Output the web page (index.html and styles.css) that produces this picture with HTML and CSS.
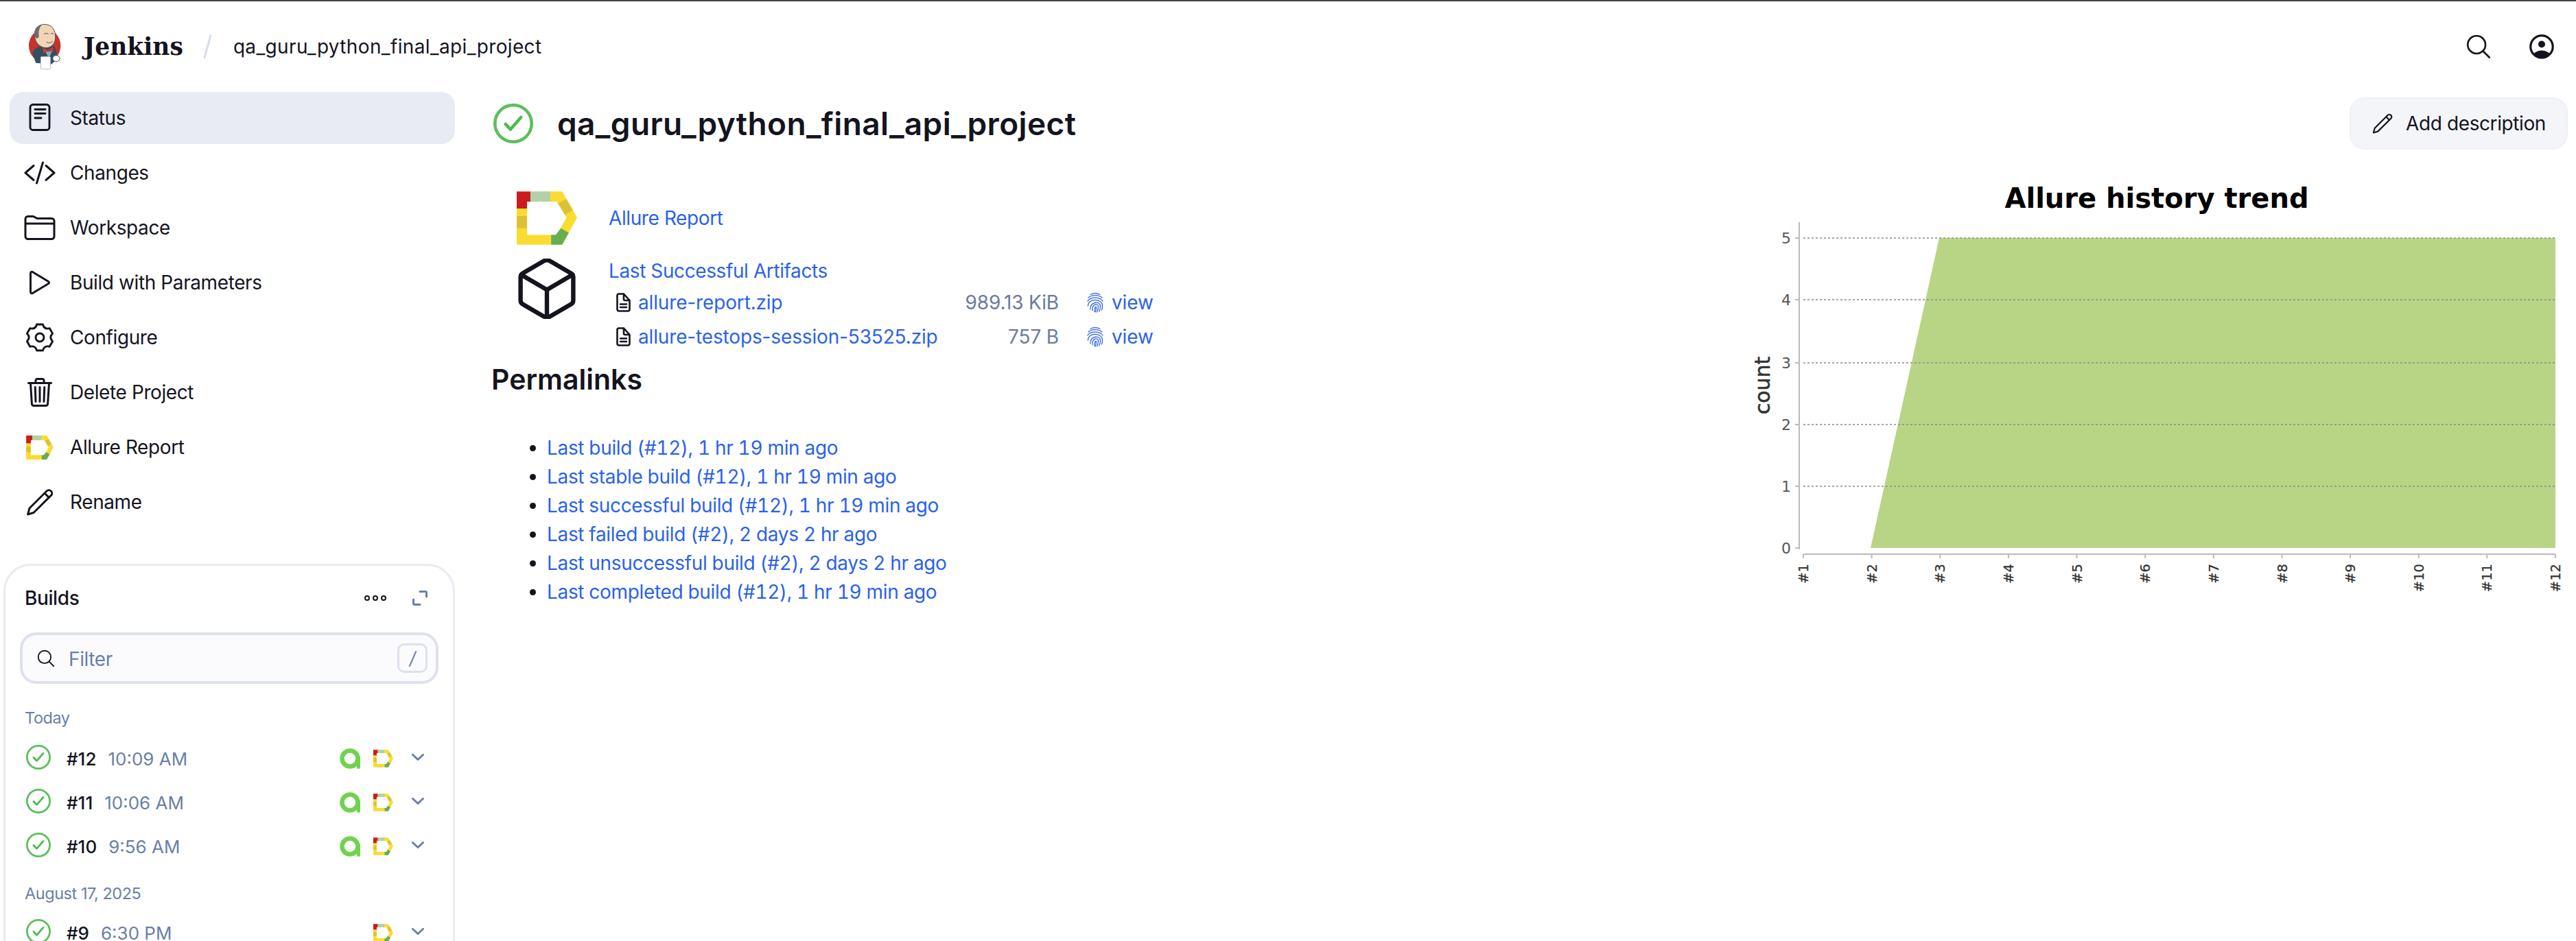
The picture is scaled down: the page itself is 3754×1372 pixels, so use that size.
FILE: index.html
```html
<!DOCTYPE html>
<html lang="en">
<head>
<meta charset="utf-8">
<title>qa_guru_python_final_api_project - Jenkins</title>
<link rel="stylesheet" href="styles.css">
</head>
<body>
<svg class="defs" xmlns="http://www.w3.org/2000/svg">
  <symbol id="i-doc" viewBox="0 0 48 48"><rect x="10" y="4.500" width="28" height="37" rx="4"/><path d="M17 11.500h15M17 17.500h15M17 24h9"/></symbol>
  <symbol id="i-code" viewBox="0 0 512 512"><polyline points="160 368 32 256 160 144"/><polyline points="352 368 480 256 352 144"/><line x1="304" y1="96" x2="208" y2="416"/></symbol>
  <symbol id="i-folder" viewBox="0 0 512 512"><path d="M440 432H72a40 40 0 01-40-40V120a40 40 0 0140-40h75.890a40 40 0 0122.190 6.720l27.840 18.560a40 40 0 0022.190 6.720H440a40 40 0 0140 40v240a40 40 0 01-40 40zM32 192h448"/></symbol>
  <symbol id="i-play" viewBox="0 0 512 512"><path d="M112 111v290c0 17.440 17 28.520 31 20.160l247.900-148.370c12.120-7.250 12.120-26.330 0-33.580L143 90.840c-14-8.360-31 2.720-31 20.160z"/></symbol>
  <symbol id="i-cog" viewBox="0 0 48 48"><path d="M19.600 5L28.400 5Q30.500 12.700 38.300 10.700L42.600 18.300Q37 24 42.600 29.700L38.300 37.300Q30.500 35.300 28.400 43L19.600 43Q17.500 35.300 9.700 37.300L5.400 29.700Q11 24 5.400 18.300L9.700 10.700Q17.500 12.700 19.600 5Z"/><circle cx="24" cy="24" r="6"/></symbol>
  <symbol id="i-trash" viewBox="0 0 512 512"><path d="M112 112l20 320c.950 18.490 14.400 32 32 32h184c17.670 0 30.870-13.510 32-32l20-320"/><line x1="80" y1="112" x2="432" y2="112"/><path d="M192 112V72h0a23.930 23.930 0 0124-24h80a23.930 23.930 0 0124 24h0v40M256 176v224M184 176l8 224M328 176l-8 224"/></symbol>
  <symbol id="i-pencil" viewBox="0 0 48 48"><path d="M6.500 42L9 33L34 8a4.500 4.500 0 0 1 6.400 6.400L15 39.500ZM31 11l6.400 6.400"/></symbol>
  <symbol id="i-search" viewBox="0 0 512 512"><path d="M221.090 64a157.090 157.090 0 10157.090 157.090A157.100 157.100 0 00221.090 64z"/><path d="M338.290 338.290L448 448"/></symbol>
  <symbol id="i-check" viewBox="0 0 64 64"><circle class="ring" cx="32" cy="32" r="29.500"/><path class="tick" d="M19.500 33L27.500 41.500L44.500 22"/></symbol>
  <symbol id="i-allure" viewBox="70 58 263 232">
    <path class="d-yellow" fill-rule="evenodd" d="M70 58H268L333 172L268 290H70ZM115 102V247H245L287 172L245 102Z"/>
    <path class="d-red" d="M70 58H130V102H115V132H70Z"/>
    <path class="d-pale" d="M130 58H216V102H130Z"/>
    <path class="d-dark" d="M70 165H115V218H70Z"/>
    <path class="d-dark" d="M286 90L315 140L280 160L250 110Z"/>
    <path class="d-green" d="M220 247H240L262 218L297 238L268 290H220Z"/>
  </symbol>
  <symbol id="i-q" viewBox="0 0 32 32"><circle class="q-ring" cx="15" cy="16" r="11.500"/><path class="q-tail" d="M27.500 15V28.500"/></symbol>
  <symbol id="i-chev" viewBox="0 0 18 10"><path d="M1.500 1.500L9 8.500L16.500 1.500"/></symbol>
  <symbol id="i-file" viewBox="0 0 21 28"><path d="M3.500 1.500H11L19.500 11V24a2.500 2.500 0 0 1-2.500 2.500H4A2.500 2.500 0 0 1 1.500 24V3.500a2 2 0 0 1 2-2zM11 1.500V9a2 2 0 0 0 2 2h6.500M6 16.500h9M6 21h9"/></symbol>
  <symbol id="i-print" viewBox="0 0 26 30"><path d="M6 3.500C10 1 16 1 20 3.500M3 8C8 3.500 18 3.500 23 8M2 13C6 6.500 20 6.500 24 13M2.500 20C2.500 8.500 23.500 8.500 23.500 20C23.500 22 23.300 24 22.500 26M6 25C5 13.500 20.500 12 20.500 20.500C20.500 23 20 26 18.800 28M9 26.800C8 17 17.500 15.500 17.500 21C17.500 24 17 26.500 15.500 29M12 28C11.500 22 14.500 20 14.500 22.500C14.500 25 14 27 13 29"/></symbol>
</svg>

<header class="topbar">
  <a class="brand" href="#">
    <svg class="logo" viewBox="60 95 155 215" xmlns="http://www.w3.org/2000/svg">
      <ellipse cx="138" cy="198" rx="72" ry="76" fill="#c8322f"/>
      <path d="M82 232C88 212 112 200 130 198L180 200C192 215 196 240 190 262L168 282L98 276Z" fill="#335061"/>
      <path d="M92 150C92 112 118 100 142 102C172 104 190 130 186 168C183 192 165 208 145 208C118 208 92 186 92 150Z" fill="#f0d6b7" stroke="#49483f" stroke-width="3"/>
      <path d="M92 150C90 122 104 108 124 104C110 122 110 140 112 158C102 170 94 166 92 150Z" fill="#6d6b6d"/>
      <path d="M135 146c6-5 14-5 20 0M165 145c4-3 9-3 14 0M146 182c10 6 20 4 28-4" fill="none" stroke="#49483f" stroke-width="3"/>
      <path d="M130 208L152 218L176 204L176 228L152 222L132 232Z" fill="#d33833"/>
      <path d="M142 226L170 224L160 250L152 246Z" fill="#81b0c4"/>
      <rect x="120" y="248" width="44" height="56" rx="4" fill="#fff" stroke="#b8b8b8" stroke-width="3"/>
      <ellipse cx="190" cy="256" rx="16" ry="14" fill="#fff" stroke="#49483f" stroke-width="3"/>
    </svg>
    <span class="brand-name">Jenkins</span>
  </a>
  <span class="crumb-sep"></span>
  <a class="crumb" href="#">qa_guru_python_final_api_project</a>
  <div class="top-actions">
    <svg class="ico top-search"><use href="#i-search"/></svg>
    <svg class="top-user" viewBox="0 0 36 36" xmlns="http://www.w3.org/2000/svg">
      <defs><clipPath id="user-clip"><circle cx="18" cy="18" r="16"/></clipPath></defs>
      <circle class="user-ring" cx="18" cy="18" r="16.200"/>
      <circle class="user-fill" cx="18" cy="14.500" r="5"/>
      <ellipse class="user-fill" cx="18" cy="33" rx="13" ry="9.500" clip-path="url(#user-clip)"/>
    </svg>
  </div>
</header>

<div class="page">
  <aside class="sidebar">
    <nav class="side-nav">
      <a class="side-item is-active" href="#"><svg class="ico ico-fine side-ico"><use href="#i-doc"/></svg>Status</a>
      <a class="side-item" href="#"><svg class="ico side-ico"><use href="#i-code"/></svg>Changes</a>
      <a class="side-item" href="#"><svg class="ico side-ico"><use href="#i-folder"/></svg>Workspace</a>
      <a class="side-item" href="#"><svg class="ico side-ico"><use href="#i-play"/></svg>Build with Parameters</a>
      <a class="side-item" href="#"><svg class="ico ico-fine side-ico"><use href="#i-cog"/></svg>Configure</a>
      <a class="side-item" href="#"><svg class="ico side-ico"><use href="#i-trash"/></svg>Delete Project</a>
      <a class="side-item" href="#"><span class="side-allure"><svg class="allure-sm"><use href="#i-allure"/></svg></span>Allure Report</a>
      <a class="side-item" href="#"><svg class="ico ico-fine side-ico"><use href="#i-pencil"/></svg>Rename</a>
    </nav>

    <section class="builds">
      <div class="builds-head">
        <span class="builds-title">Builds</span>
        <span class="dots"><i></i><i></i><i></i></span>
        <svg class="expand" viewBox="0 0 22 22" xmlns="http://www.w3.org/2000/svg"><path d="M11 1.500H19A1.500 1.500 0 0 1 20.500 3V9M1.500 13V19A1.500 1.500 0 0 0 3 20.500H11"/></svg>
      </div>
      <div class="filter">
        <svg class="ico filter-ico"><use href="#i-search"/></svg>
        <span class="filter-text">Filter</span>
        <kbd class="filter-key">/</kbd>
      </div>
      <div class="group-label">Today</div>
      <div class="build-row">
        <svg class="check-sm"><use href="#i-check"/></svg><a class="build-no" href="#">#12</a><span class="build-time">10:09 AM</span>
        <span class="build-actions"><svg class="q-ico"><use href="#i-q"/></svg><svg class="allure-xs"><use href="#i-allure"/></svg><svg class="chev"><use href="#i-chev"/></svg></span>
      </div>
      <div class="build-row">
        <svg class="check-sm"><use href="#i-check"/></svg><a class="build-no" href="#">#11</a><span class="build-time">10:06 AM</span>
        <span class="build-actions"><svg class="q-ico"><use href="#i-q"/></svg><svg class="allure-xs"><use href="#i-allure"/></svg><svg class="chev"><use href="#i-chev"/></svg></span>
      </div>
      <div class="build-row">
        <svg class="check-sm"><use href="#i-check"/></svg><a class="build-no" href="#">#10</a><span class="build-time">9:56 AM</span>
        <span class="build-actions"><svg class="q-ico"><use href="#i-q"/></svg><svg class="allure-xs"><use href="#i-allure"/></svg><svg class="chev"><use href="#i-chev"/></svg></span>
      </div>
      <div class="group-label group-next">August 17, 2025</div>
      <div class="build-row">
        <svg class="check-sm"><use href="#i-check"/></svg><a class="build-no" href="#">#9</a><span class="build-time">6:30 PM</span>
        <span class="build-actions"><svg class="allure-xs"><use href="#i-allure"/></svg><svg class="chev"><use href="#i-chev"/></svg></span>
      </div>
    </section>
  </aside>

  <main class="main">
    <div class="title-row">
      <svg class="check-lg"><use href="#i-check"/></svg>
      <h1 class="title">qa_guru_python_final_api_project</h1>
      <button class="add-desc" type="button"><svg class="ico ico-fine add-ico"><use href="#i-pencil"/></svg>Add description</button>
    </div>
    <div class="main-body">
      <div class="main-left">
        <div class="task">
          <svg class="allure-lg"><use href="#i-allure"/></svg>
          <a class="link" href="#">Allure Report</a>
        </div>
        <div class="task task-artifacts">
          <svg class="ico cube" viewBox="36 36 440 440" xmlns="http://www.w3.org/2000/svg"><path d="M448 341.370V170.610A32 32 0 00432.110 143l-152-88.460a47.940 47.940 0 00-48.240 0L79.890 143A32 32 0 0064 170.610v170.760A32 32 0 0079.890 369l152 88.460a48 48 0 0048.240 0l152-88.460A32 32 0 00448 341.370z"/><polyline points="69 153.990 256 263.990 443 153.990"/><line x1="256" y1="463.990" x2="256" y2="263.990"/></svg>
          <div class="artifacts">
            <a class="link artifacts-link" href="#">Last Successful Artifacts</a>
            <div class="artifact-row">
              <svg class="file-ico"><use href="#i-file"/></svg>
              <a class="link" href="#">allure-report.zip</a>
              <span class="size">989.13 KiB</span>
              <a class="link view" href="#"><svg class="print-ico"><use href="#i-print"/></svg>view</a>
            </div>
            <div class="artifact-row">
              <svg class="file-ico"><use href="#i-file"/></svg>
              <a class="link" href="#">allure-testops-session-53525.zip</a>
              <span class="size">757 B</span>
              <a class="link view" href="#"><svg class="print-ico"><use href="#i-print"/></svg>view</a>
            </div>
          </div>
        </div>
        <h2 class="perma-title">Permalinks</h2>
        <ul class="perma-list">
          <li><a class="link" href="#">Last build (#12), 1 hr 19 min ago</a></li>
          <li><a class="link" href="#">Last stable build (#12), 1 hr 19 min ago</a></li>
          <li><a class="link" href="#">Last successful build (#12), 1 hr 19 min ago</a></li>
          <li><a class="link" href="#">Last failed build (#2), 2 days 2 hr ago</a></li>
          <li><a class="link" href="#">Last unsuccessful build (#2), 2 days 2 hr ago</a></li>
          <li><a class="link" href="#">Last completed build (#12), 1 hr 19 min ago</a></li>
        </ul>
      </div>
      <svg class="chart" viewBox="2540 248 1214 640" xmlns="http://www.w3.org/2000/svg">
        <text class="c-title" x="3143" y="303">Allure history trend</text>
        <polygon class="c-area" points="2726,799 2826,347 3724,347 3724,799"/>
        <path class="c-grid" d="M2628 347H3724M2628 437H3724M2628 529H3724M2628 619H3724M2628 709H3724"/>
        <path class="c-axis" d="M2622 324V801M2616 347H2622M2616 437H2622M2616 529H2622M2616 619H2622M2616 709H2622M2616 799H2622"/>
        <path class="c-axis" d="M2628 808H3724M2628 808v6M2727.600 808v6M2827.300 808v6M2926.900 808v6M3026.500 808v6M3126.200 808v6M3225.800 808v6M3325.500 808v6M3425.100 808v6M3524.700 808v6M3624.400 808v6M3724 808v6"/>
        <text class="c-num" x="2610" y="355">5</text>
        <text class="c-num" x="2610" y="445">4</text>
        <text class="c-num" x="2610" y="537">3</text>
        <text class="c-num" x="2610" y="627">2</text>
        <text class="c-num" x="2610" y="717">1</text>
        <text class="c-num" x="2610" y="807">0</text>
        <text class="c-count" transform="rotate(-90 2579 562)" x="2579" y="562">count</text>
        <text class="c-tick" transform="rotate(-90 2635 822)" x="2635" y="822">#1</text>
        <text class="c-tick" transform="rotate(-90 2734.600 822)" x="2734.600" y="822">#2</text>
        <text class="c-tick" transform="rotate(-90 2834.300 822)" x="2834.300" y="822">#3</text>
        <text class="c-tick" transform="rotate(-90 2933.900 822)" x="2933.900" y="822">#4</text>
        <text class="c-tick" transform="rotate(-90 3033.500 822)" x="3033.500" y="822">#5</text>
        <text class="c-tick" transform="rotate(-90 3133.200 822)" x="3133.200" y="822">#6</text>
        <text class="c-tick" transform="rotate(-90 3232.800 822)" x="3232.800" y="822">#7</text>
        <text class="c-tick" transform="rotate(-90 3332.500 822)" x="3332.500" y="822">#8</text>
        <text class="c-tick" transform="rotate(-90 3432.100 822)" x="3432.100" y="822">#9</text>
        <text class="c-tick" transform="rotate(-90 3531.700 822)" x="3531.700" y="822">#10</text>
        <text class="c-tick" transform="rotate(-90 3631.400 822)" x="3631.400" y="822">#11</text>
        <text class="c-tick" transform="rotate(-90 3731 822)" x="3731" y="822">#12</text>
      </svg>
    </div>
  </main>
</div>
</body>
</html>
```
FILE: styles.css
```css
* { box-sizing: border-box; }
html, body { height: 1372px; overflow: hidden; }
body {
  margin: 0;
  background: #fff;
  color: #14141f;
  font-family: Inter, "Liberation Sans", sans-serif;
  font-size: 28px;
  letter-spacing: -0.4px;
  line-height: 42px;
}
a { color: inherit; text-decoration: none; white-space: nowrap; }
.defs { display: none; }

.ico {
  fill: none;
  stroke: #14141f;
  stroke-width: 32;
  stroke-linecap: round;
  stroke-linejoin: round;
}
.ico-fine { stroke-width: 2.900; }

/* Top bar */
.topbar {
  display: flex;
  align-items: center;
  height: 134px;
  border-top: 2px solid #444;
  padding: 0 32px 0 40px;
}
.brand { display: flex; align-items: center; gap: 32px; }
.logo { width: 50px; height: 70px; flex: none; }
.brand-name {
  font-family: "DejaVu Serif", serif;
  font-weight: 700;
  font-size: 34.500px;
  letter-spacing: 0;
}
.crumb-sep {
  width: 3px;
  height: 36px;
  margin: 0 36px 0 34px;
  border-radius: 2px;
  background: #d5dcec;
  transform: rotate(15deg);
}
.crumb { letter-spacing: 0.35px; }
.top-actions { display: flex; align-items: center; gap: 53px; margin-left: auto; }
.top-search { width: 42px; height: 42px; }
.top-user { width: 36px; height: 36px; }
.user-ring { fill: none; stroke: #14141f; stroke-width: 3.200; }
.user-fill { fill: #14141f; }

/* Page */
.page { display: flex; align-items: flex-start; }
.sidebar { flex: none; width: 718px; padding-left: 5px; }
.side-nav { display: flex; flex-direction: column; gap: 4px; width: 658px; padding-left: 9px; }
.side-item {
  display: flex;
  align-items: center;
  gap: 20px;
  height: 76px;
  padding-left: 20px;
  border-radius: 20px;
}
.is-active { background: #e8ebf4; }
.side-ico { width: 48px; height: 48px; flex: none; }
.side-allure { display: flex; justify-content: center; align-items: center; width: 48px; height: 48px; flex: none; }
.allure-sm { width: 40px; height: 35px; }

/* Builds card */
.builds {
  width: 658px;
  height: 700px;
  margin-top: 52px;
  padding: 0 21px;
  border: 3px solid #e8ebf4;
  border-radius: 40px;
}
.builds-head { display: flex; align-items: center; height: 94px; padding: 0 16px 0 7px; }
.builds-title { font-weight: 500; }
.dots { display: flex; gap: 4px; margin-left: auto; }
.dots i { width: 8px; height: 8px; border: 2px solid #14141f; border-radius: 50%; }
.expand {
  width: 22px;
  height: 22px;
  margin-left: 38px;
  fill: none;
  stroke: #697fa8;
  stroke-width: 3;
  stroke-linecap: round;
}
.filter {
  display: flex;
  align-items: center;
  height: 75px;
  margin-top: 3px;
  padding: 0 12px 0 19px;
  border: 4px solid #dde1ee;
  border-radius: 24px;
  background: #fbfbfd;
}
.filter-ico { width: 30px; height: 30px; flex: none; }
.filter-text { margin-left: 18px; padding-top: 2px; color: #697fa8; }
.filter-key {
  display: flex;
  align-items: center;
  justify-content: center;
  width: 44px;
  height: 43px;
  margin-left: auto;
  border: 3px solid #dde1ee;
  border-radius: 10px;
  color: #697fa8;
  font: italic 26px Inter, sans-serif;
}
.group-label { height: 40px; margin: 30px 0 7px 7px; color: #697fa8; font-size: 23.500px; letter-spacing: -0.45px; line-height: 40px; }
.group-next { margin: 17px 0 5px 7px; }
.build-row { display: flex; align-items: center; height: 64px; padding-left: 9px; }
.check-sm { width: 36px; height: 36px; flex: none; margin-top: -4px; }
.build-no { margin-left: 23px; padding-top: 2px; font-size: 26px; font-weight: 500; letter-spacing: 0; }
.build-time { margin-left: 17px; padding-top: 2px; color: #697fa8; font-size: 26px; letter-spacing: 0; }
.build-actions { display: flex; align-items: center; margin-left: auto; padding-right: 21px; }
.q-ico { width: 32px; height: 32px; margin-right: 17px; }
.allure-xs { width: 29px; height: 26px; margin-right: 27px; }
.chev { width: 18px; height: 10px; margin-top: -5px; fill: none; stroke: #697fa8; stroke-width: 3; stroke-linecap: round; stroke-linejoin: round; }

.ring { fill: none; stroke: #5cbf5c; stroke-width: 5; }
.tick { fill: none; stroke: #4bbb4b; stroke-width: 5; stroke-linecap: round; stroke-linejoin: round; }
.d-yellow { fill: #f9dc2f; }
.d-red { fill: #cc1c1f; }
.d-pale { fill: #b3d1a7; }
.d-dark { fill: #dcc233; }
.d-green { fill: #67ae50; }
.q-ring { fill: none; stroke: #6ed44e; stroke-width: 6.500; }
.q-tail { fill: none; stroke: #6ed44e; stroke-width: 5; stroke-linecap: round; }

/* Main */
.main { flex: 1; min-width: 0; padding-right: 12px; }
.title-row { display: flex; align-items: center; height: 76px; margin-top: 8px; }
.check-lg { width: 58px; height: 58px; flex: none; margin-left: 1px; }
.title { margin: 0 0 0 35px; font-size: 46px; letter-spacing: 0.35px; line-height: 60px; font-weight: 600; }
.add-desc {
  display: flex;
  align-items: center;
  gap: 16px;
  height: 76px;
  margin-left: auto;
  padding: 0 30px 0 28px;
  border: 2px solid #eef0f5;
  border-radius: 22px;
  background: #f4f5f9;
  color: #14141f;
  font: 28px Inter, sans-serif;
  letter-spacing: -0.4px;
}
.add-ico { width: 36px; height: 36px; }
.main-body { display: flex; justify-content: space-between; align-items: flex-start; }
.main-left { padding-top: 61px; }
.chart { flex: none; width: 1214px; height: 640px; margin: 30px -12px 0 0; }
.c-title { fill: #000; font: 700 40px "DejaVu Sans", sans-serif; letter-spacing: 0; text-anchor: middle; }
.c-area { fill: #b8d586; }
.c-grid { fill: none; stroke: #888; stroke-width: 2; stroke-dasharray: 3 3; opacity: 0.75; }
.c-axis { fill: none; stroke: #bbb; stroke-width: 2; }
.c-num { fill: #555; font: 22px "DejaVu Sans", sans-serif; letter-spacing: 0; text-anchor: end; }
.c-count { fill: #333; stroke: #333; stroke-width: 0.600; font: 30px "DejaVu Sans", sans-serif; letter-spacing: 0; text-anchor: middle; }
.c-tick { fill: #333; stroke: #333; stroke-width: 0.300; font: 19.500px "DejaVu Sans", sans-serif; letter-spacing: 0; text-anchor: end; }

.task { display: flex; align-items: center; gap: 46px; margin-left: 35px; }
.allure-lg { width: 88px; height: 78px; flex: none; }
.task-artifacts { align-items: flex-start; margin-top: 17px; }
.cube { width: 88px; height: 88px; flex: none; margin-top: 3px; }
.link { color: #2a62ea; }
.artifacts { width: 791px; }
.artifacts-link { display: block; }
.artifact-row {
  display: grid;
  grid-template-columns: 32px 441px 172px auto;
  align-items: center;
  height: 50px;
  margin-left: 11px;
  letter-spacing: -0.15px;
}
.file-ico { width: 21px; height: 28px; fill: none; stroke: #14141f; stroke-width: 2.600; stroke-linecap: round; stroke-linejoin: round; }
.size { color: #6c7a9c; text-align: right; white-space: nowrap; }
.view { display: flex; align-items: center; gap: 11px; margin-left: 40px; }
.print-ico { width: 26px; height: 30px; fill: none; stroke: #2a62ea; stroke-width: 1.300; stroke-linecap: round; }

.perma-title { margin: 12px 0 0 -2px; font-size: 41px; letter-spacing: 0; line-height: 50px; font-weight: 600; }
.perma-list { margin: 54px 0 0; padding-left: 79px; letter-spacing: -0.33px; font-variant-numeric: tabular-nums; }
```
